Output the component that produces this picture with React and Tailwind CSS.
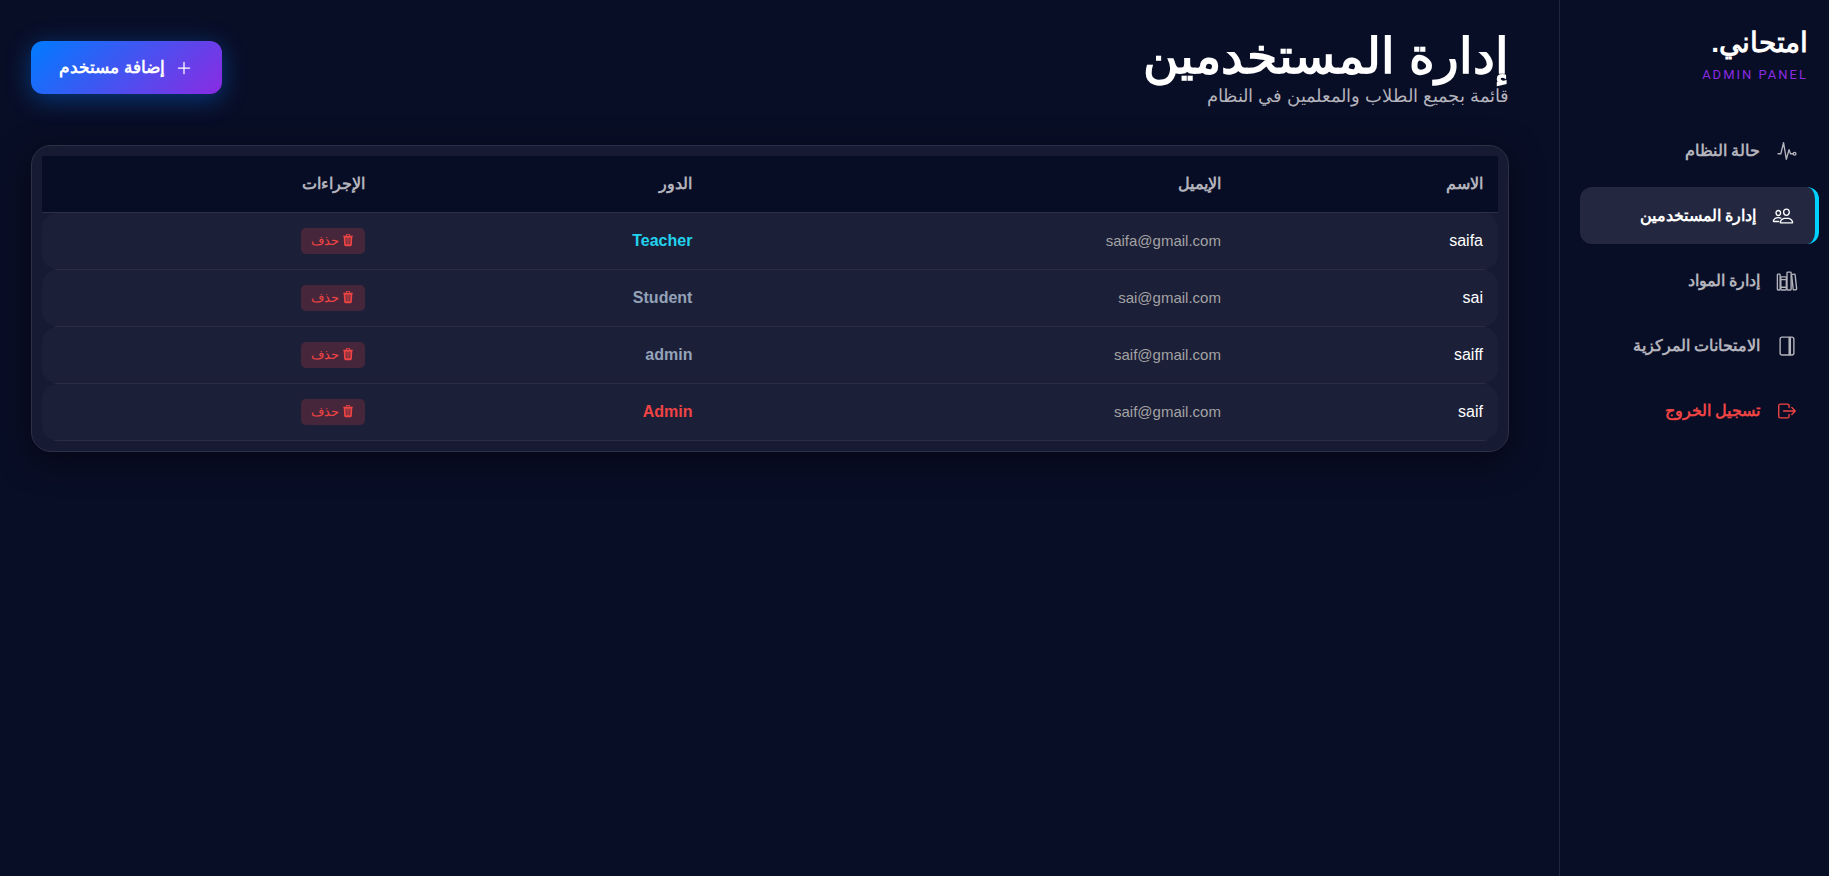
import {
  IoAdd, IoJournalOutline, IoLibraryOutline, IoLogOutOutline, IoPeopleOutline, IoPulseOutline, IoTrash,
} from 'react-icons/io5';

const NAV = [
  { label: 'حالة النظام', icon: IoPulseOutline },
  { label: 'إدارة المستخدمين', icon: IoPeopleOutline, active: true },
  { label: 'إدارة المواد', icon: IoLibraryOutline },
  { label: 'الامتحانات المركزية', icon: IoJournalOutline },
  { label: 'تسجيل الخروج', icon: IoLogOutOutline, danger: true },
];

const USERS = [
  { name: 'saifa', email: 'saifa@gmail.com', role: 'Teacher' },
  { name: 'sai', email: 'sai@gmail.com', role: 'Student' },
  { name: 'saiff', email: 'saif@gmail.com', role: 'admin' },
  { name: 'saif', email: 'saif@gmail.com', role: 'Admin' },
];

// Roles are case sensitive, anything unknown stays grey
const ROLE_COLORS = {
  Teacher: 'text-[#22d3ee]',
  Admin: 'text-[#ef4444]',
};

// The transparent bottom border lets the row's own divider line show through
const CELL = 'border-b border-transparent bg-[#1c1f38] bg-clip-padding px-[15px] first:rounded-s-[15px] last:rounded-e-[15px]';
const HEAD_CELL = 'border-b border-white/15 px-[15px] text-right';

function NavItem({ item }) {
  const Icon = item.icon;
  let tone = 'text-[#b3b3bb]';
  if (item.active) tone = 'border-r-4 border-[#00d2ff] bg-[#23273f] text-white';
  if (item.danger) tone = 'text-[#ef4444]';
  return (
    <a
      href="#"
      aria-current={item.active ? 'page' : undefined}
      className={`flex h-[57px] items-center gap-4 rounded-xl px-[21px] text-base font-bold ${tone}`}
    >
      <Icon size={22} />
      <span>{item.label}</span>
    </a>
  );
}

function Sidebar() {
  return (
    <aside className="w-[270px] shrink-0 border-l border-white/10 pt-[25px]">
      <div className="pr-[21px]">
        <h2 className="text-[28px] leading-9 font-bold">امتحاني.</h2>
        <p className="mt-[2px] font-['Roboto',sans-serif] text-[13px] leading-6 tracking-[2px] text-[#8a2be2]">ADMIN PANEL</p>
      </div>
      <nav className="mt-[35px] flex flex-col gap-2 pr-[10px] pl-5">
        {NAV.map((item) => <NavItem key={item.label} item={item} />)}
      </nav>
    </aside>
  );
}

function UsersTable() {
  return (
    <table className="w-full table-fixed border-separate border-spacing-0">
      <thead className="bg-[#080d26]">
        <tr className="h-[57px] text-[#b3b3bb]">
          <th className={`w-[18%] ${HEAD_CELL}`}>الاسم</th>
          <th className={`w-[36.3%] ${HEAD_CELL}`}>الإيميل</th>
          <th className={`w-[22.5%] ${HEAD_CELL}`}>الدور</th>
          <th className={HEAD_CELL}>الإجراءات</th>
        </tr>
      </thead>
      <tbody>
        {USERS.map((u) => (
          <tr key={u.name} className="h-[57px] bg-[linear-gradient(to_top,#292c42_1px,transparent_1px)]">
            <td className={CELL}>{u.name}</td>
            <td className={`text-[15px] text-[#a3a3a3] ${CELL}`}>{u.email}</td>
            <td className={`font-bold ${CELL} ${ROLE_COLORS[u.role] || 'text-[#94a3b8]'}`}>{u.role}</td>
            <td className={CELL}>
              <button className="flex items-start gap-[2px] rounded-[5px] bg-[#ef4444]/20 px-[10px] py-[5px] text-[13px] leading-4 text-[#ef4444]">
                <IoTrash size={14} /> حذف
              </button>
            </td>
          </tr>
        ))}
      </tbody>
    </table>
  );
}

export default function App() {
  return (
    <div dir="rtl" className="flex min-h-screen bg-[#090e27] font-['Liberation_Sans',sans-serif] text-white">
      <Sidebar />
      <main className="min-w-0 flex-1 pt-[30px] pr-[50px] pl-[31px]">
        <header className="flex items-start justify-between">
          <div>
            <h1 className="text-[49px] leading-[52px] font-bold">إدارة المستخدمين</h1>
            <p className="text-lg leading-7 text-[#b3b3bb]">قائمة بجميع الطلاب والمعلمين في النظام</p>
          </div>
          <button className="mt-[11px] flex h-[53px] items-center gap-[9px] rounded-xl bg-linear-[135deg,#007bff,#8a2be2] px-7 text-[17px] font-bold shadow-[0_5px_25px_rgba(0,123,255,0.4)]">
            <IoAdd size={20} /> إضافة مستخدم
          </button>
        </header>

        <section className="mt-[35px] rounded-[20px] border border-[#2d3147] bg-[#161a32] p-[10px] shadow-[0_8px_32px_rgba(0,0,0,0.5)]">
          <UsersTable />
        </section>
      </main>
    </div>
  );
}
